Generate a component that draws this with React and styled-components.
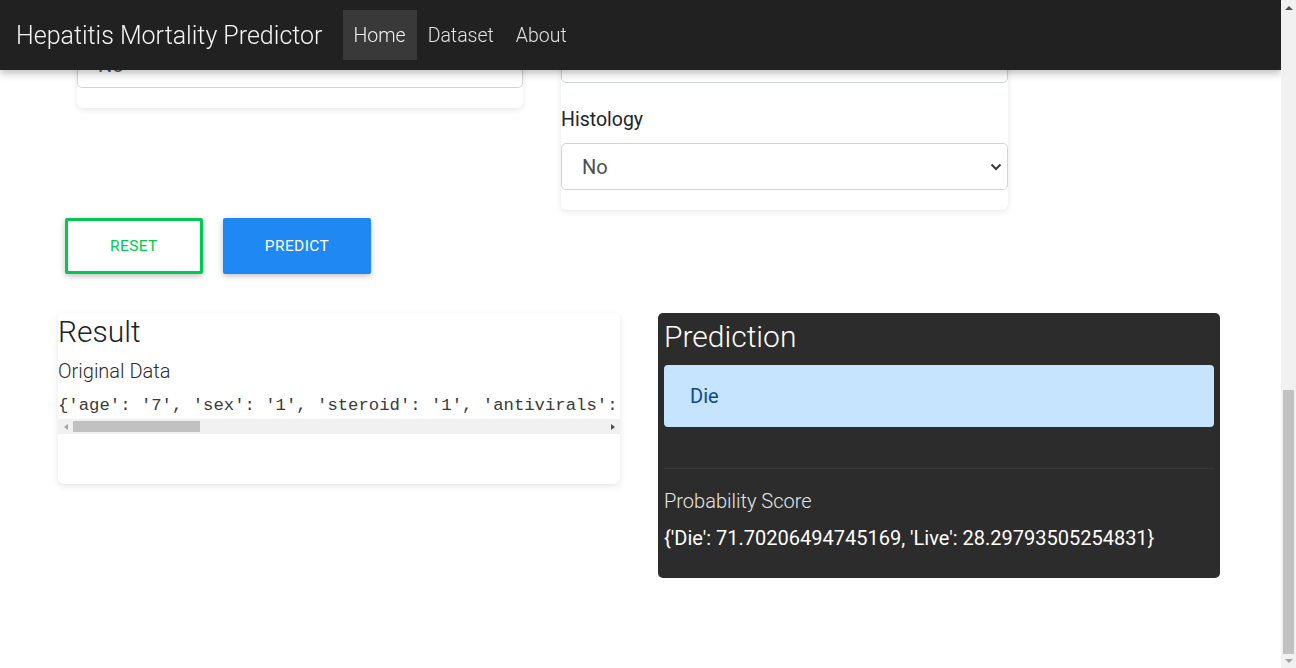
import { useLayoutEffect } from "react";
import styled, { createGlobalStyle } from "styled-components";

const GlobalStyle = createGlobalStyle`
  html { scroll-behavior: auto; }
  body {
    margin: 0;
    background: #fff;
    font-family: Roboto, "Noto Sans", sans-serif;
    color: #212529;
  }
  * { box-sizing: border-box; }
`;

const leftFields = [
  { label: "Age", value: "7" },
  { label: "Sex", value: "Male" },
  { label: "Steroid", value: "No" },
  { label: "Antivirals", value: "No" },
  { label: "Fatigue", value: "No" },
  { label: "Malaise", value: "No" },
  { label: "Anorexia", value: "No" },
  { label: "Liver Big", value: "No" },
  { label: "Liver Firm", value: "No" },
];

const rightFields = [
  { label: "Spleen Palpable", value: "No" },
  { label: "Spiders", value: "No" },
  { label: "Ascites", value: "No" },
  { label: "Varices", value: "No" },
  { label: "Bilirubin", value: "1" },
  { label: "Alk Phosphate", value: "1" },
  { label: "SGOT", value: "1" },
  { label: "Albumin", value: "1" },
  { label: "Protime", value: "1" },
  { label: "Histology", value: "No" },
];

const originalData =
  "{'age': '7', 'sex': '1', 'steroid': '1', 'antivirals': '1', 'fatigue': '1', 'malaise': '1', 'anorexia': '1', 'liver_big': '1', 'liver_firm': '1', 'spleen_palpable': '1', 'spiders': '1', 'ascites': '1', 'varices': '1', 'bilirubin': '1'}";

function Field({ label, value }) {
  return (
    <FieldGroup>
      <Label>{label}</Label>
      <SelectWrap>
        <Select defaultValue={value}>
          <option>{value}</option>
          {value !== "Yes" && <option>Yes</option>}
        </Select>
        <Chevron width="12" height="8" viewBox="0 0 12 8">
          <path d="M1.5 1.5 6 6l4.5-4.5" fill="none" stroke="#343a40" strokeWidth="2" />
        </Chevron>
      </SelectWrap>
    </FieldGroup>
  );
}

export default function App() {
  useLayoutEffect(() => {
    window.scrollTo(0, document.documentElement.scrollHeight);
  }, []);

  return (
    <>
      <GlobalStyle />
      <Navbar>
        <Brand href="#">Hepatitis Mortality Predictor</Brand>
        <NavLinks>
          <li><NavLink href="#" $active>Home</NavLink></li>
          <li><NavLink href="#">Dataset</NavLink></li>
          <li><NavLink href="#">About</NavLink></li>
        </NavLinks>
      </Navbar>

      <PageScrollbar>
        <VArrow $up />
        <VTrack>
          <VThumb />
        </VTrack>
        <VArrow $dim />
      </PageScrollbar>

      <Page>
        <FormGrid>
          <FormCard $top={5}>
            {leftFields.map((f) => (
              <Field key={f.label} {...f} />
            ))}
          </FormCard>
          <FormCard $top={0}>
            {rightFields.map((f) => (
              <Field key={f.label} {...f} />
            ))}
          </FormCard>
        </FormGrid>

        <ButtonRow>
          <Button $outline type="reset">Reset</Button>
          <Button type="submit">Predict</Button>
        </ButtonRow>

        <ResultGrid>
          <ResultCard>
            <CardTitle>Result</CardTitle>
            <SubTitle>Original Data</SubTitle>
            <DataPre>{originalData}</DataPre>
            <HScroll>
              <HArrow $dim />
              <HTrack>
                <HThumb />
              </HTrack>
              <HArrow $right />
            </HScroll>
          </ResultCard>

          <PredictionCard>
            <CardTitle $light>Prediction</CardTitle>
            <Alert>Die</Alert>
            <Divider />
            <SubTitle $light>Probability Score</SubTitle>
            <Score>{"{'Die': 71.70206494745169, 'Live': 28.29793505254831}"}</Score>
          </PredictionCard>
        </ResultGrid>
      </Page>
    </>
  );
}

const Navbar = styled.nav`
  position: fixed;
  top: 0;
  left: 0;
  right: 15px;
  height: 70px;
  display: flex;
  align-items: center;
  padding-left: 16px;
  background: #212121;
  box-shadow: 0 3px 8px rgba(0, 0, 0, 0.28);
  z-index: 10;
`;

const Brand = styled.a`
  font-size: 25px;
  font-weight: 300;
  color: #f5f5f5;
  text-decoration: none;
  margin-right: 20px;
`;

const NavLinks = styled.ul`
  display: flex;
  list-style: none;
  margin: 0;
  padding: 0;
`;

const NavLink = styled.a`
  display: flex;
  align-items: center;
  height: 50px;
  padding: 0 11px;
  font-size: 19.5px;
  font-weight: 300;
  text-decoration: none;
  color: ${(p) => (p.$active ? "#f2f2f2" : "#e2e2e2")};
  background: ${(p) => (p.$active ? "#393939" : "transparent")};
`;

const PageScrollbar = styled.div`
  position: fixed;
  top: 0;
  right: 0;
  bottom: 0;
  width: 15px;
  display: flex;
  flex-direction: column;
  background: #f1f1f1;
  z-index: 20;
`;

const VArrow = styled.div`
  flex: 0 0 15px;
  display: flex;
  align-items: center;
  justify-content: center;

  &::before {
    content: "";
    width: 0;
    height: 0;
    border-left: 4px solid transparent;
    border-right: 4px solid transparent;
    ${(p) => (p.$up ? "border-bottom" : "border-top")}: 4px solid
      ${(p) => (p.$dim ? "#a3a3a3" : "#505050")};
  }
`;

const VTrack = styled.div`
  flex: 1;
  position: relative;
`;

const VThumb = styled.div`
  position: absolute;
  left: 2px;
  right: 2px;
  top: 375px;
  height: 264px;
  background: #c1c1c1;
`;

const Page = styled.main`
  padding: 90px 0 90px 58px;
`;

const FormGrid = styled.div`
  display: grid;
  grid-template-columns: 446px 447px;
  column-gap: 38px;
  align-items: start;
  padding-left: 19px;
`;

const FormCard = styled.div`
  background: #fff;
  border-radius: 6px;
  box-shadow: 0 2px 6px rgba(0, 0, 0, 0.09);
  padding: ${(p) => p.$top}px 0 20px;
`;

const FieldGroup = styled.div`
  padding-top: 22px;
`;

const Label = styled.label`
  display: block;
  font-size: 19.5px;
  line-height: 29px;
  margin-bottom: 9px;
  color: #212529;
`;

const SelectWrap = styled.div`
  position: relative;
`;

const Select = styled.select`
  display: block;
  width: 100%;
  height: 47px;
  appearance: none;
  border: 1px solid #ced4da;
  border-radius: 5px;
  padding: 0 40px 0 20px;
  background: #fff;
  font-family: Roboto, sans-serif;
  font-size: 20px;
  color: #495057;
`;

const Chevron = styled.svg`
  position: absolute;
  right: 6px;
  top: 50%;
  transform: translateY(-50%);
  pointer-events: none;
`;

const ButtonRow = styled.div`
  display: flex;
  gap: 20px;
  margin-top: 8px;
  padding-left: 7px;
`;

const Button = styled.button`
  height: 56px;
  padding: 0 42px;
  font-family: Roboto, sans-serif;
  font-size: 15.5px;
  letter-spacing: 0.4px;
  text-transform: uppercase;
  border-radius: 2px;
  cursor: pointer;
  box-shadow: 0 2px 5px rgba(0, 0, 0, 0.16), 0 2px 10px rgba(0, 0, 0, 0.1);
  background: ${(p) => (p.$outline ? "#fff" : "#1f88f3")};
  color: ${(p) => (p.$outline ? "#00c853" : "#fff")};
  border: ${(p) => (p.$outline ? "3px solid #00c853" : "none")};
`;

const ResultGrid = styled.div`
  display: grid;
  grid-template-columns: 562px 562px;
  column-gap: 38px;
  align-items: start;
  margin-top: 39px;
`;

const ResultCard = styled.section`
  background: #fff;
  border-radius: 6px;
  box-shadow: 0 2px 6px rgba(0, 0, 0, 0.1);
  padding: 1px 0 50px;
  overflow: hidden;
`;

const CardTitle = styled.h3`
  margin: 0;
  font-size: 30px;
  font-weight: 300;
  line-height: 36px;
  color: ${(p) => (p.$light ? "#fff" : "#212121")};
`;

const SubTitle = styled.h5`
  margin: ${(p) => (p.$light ? "17px" : "6px")} 0 0;
  font-size: 20px;
  font-weight: 300;
  line-height: 30px;
  color: ${(p) => (p.$light ? "#e6e6e6" : "#2b2b2b")};
`;

const DataPre = styled.pre`
  margin: 7px 0 0;
  font-family: "Liberation Mono", monospace;
  font-size: 17.28px;
  line-height: 26px;
  white-space: pre;
  overflow: hidden;
  color: #3a3a3a;
`;

const HScroll = styled.div`
  display: flex;
  height: 15px;
  background: #f1f1f1;
`;

const HArrow = styled.div`
  flex: 0 0 15px;
  display: flex;
  align-items: center;
  justify-content: center;

  &::before {
    content: "";
    width: 0;
    height: 0;
    border-top: 3.5px solid transparent;
    border-bottom: 3.5px solid transparent;
    ${(p) => (p.$right ? "border-left" : "border-right")}: 4px solid
      ${(p) => (p.$dim ? "#a3a3a3" : "#505050")};
  }
`;

const HTrack = styled.div`
  flex: 1;
  display: flex;
  align-items: center;
`;

const HThumb = styled.div`
  width: 127px;
  height: 11px;
  background: #c1c1c1;
`;

const PredictionCard = styled.section`
  background: #2c2c2c;
  border-radius: 5px;
  padding: 6px 6px 25px;
  color: #fff;
`;

const Alert = styled.div`
  margin-top: 10px;
  padding: 16px 26px;
  border-radius: 4px;
  background: #c6e4fd;
  color: #0c4a8e;
  font-size: 20px;
  line-height: 30px;
`;

const Divider = styled.hr`
  margin: 41px 0 0;
  border: 0;
  border-top: 1px solid #363636;
`;

const Score = styled.div`
  margin-top: 7px;
  font-size: 20px;
  line-height: 30px;
  color: #fff;
`;
